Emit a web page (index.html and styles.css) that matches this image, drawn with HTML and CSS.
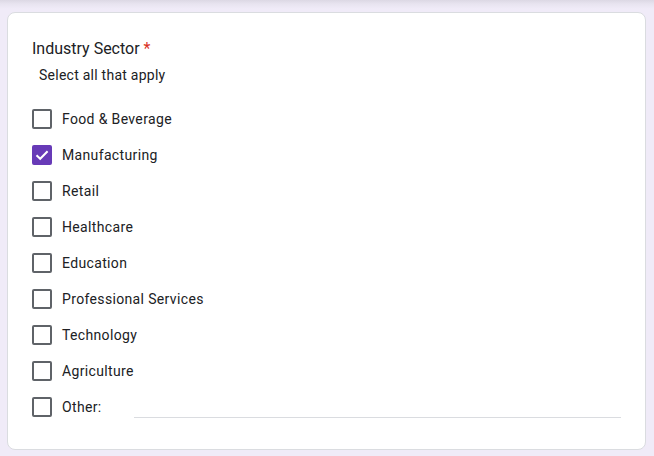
FILE: index.html
```html
<!DOCTYPE html>
<html lang="en">
<head>
<meta charset="utf-8">
<title>Industry Sector</title>
<link rel="stylesheet" href="styles.css">
</head>
<body>
<div class="page">
  <div class="card">
    <div class="title">Industry Sector <span class="req">*</span></div>
    <div class="hint">Select all that apply</div>
    <div class="options">
      <label class="opt"><span class="box"></span><span class="lbl">Food &amp; Beverage</span></label>
      <label class="opt"><span class="box checked"><svg viewBox="0 0 20 20" width="20" height="20"><path d="M4.5 10.2 L8.2 13.8 L15.6 6.2" fill="none" stroke="#fff" stroke-width="2"/></svg></span><span class="lbl">Manufacturing</span></label>
      <label class="opt"><span class="box"></span><span class="lbl">Retail</span></label>
      <label class="opt"><span class="box"></span><span class="lbl">Healthcare</span></label>
      <label class="opt"><span class="box"></span><span class="lbl">Education</span></label>
      <label class="opt"><span class="box"></span><span class="lbl">Professional Services</span></label>
      <label class="opt"><span class="box"></span><span class="lbl">Technology</span></label>
      <label class="opt"><span class="box"></span><span class="lbl">Agriculture</span></label>
      <div class="opt"><span class="box"></span><span class="lbl">Other:</span><span class="other-line"></span></div>
    </div>
  </div>
</div>
</body>
</html>
```
FILE: styles.css
```css
html, body {
  margin: 0;
  padding: 0;
}
body {
  background: #f0ebf8;
  font-family: Roboto, "Liberation Sans", Arial, sans-serif;
  color: #202124;
}
.page {
  height: 456px;
  padding: 12px 8px 0 7px;
  box-sizing: border-box;
  background: linear-gradient(to bottom, #dcd8e4 0px, #e8e4f0 4px, #f0ebf8 9px);
}
.card {
  background: #fff;
  border: 1px solid #dadce0;
  border-radius: 8px;
  padding: 24px 24px 24px 24px;
  height: 438px;
  box-sizing: border-box;
}
.title {
  font-size: 16px;
  line-height: 24px;
}
.req {
  color: #d93025;
}
.hint {
  font-size: 14px;
  line-height: 20px;
  margin-top: 4px;
  padding-left: 7px;
  letter-spacing: 0.25px;
}
.options {
  margin-top: 16px;
  display: flex;
  flex-direction: column;
}
.opt {
  display: flex;
  align-items: center;
  height: 36px;
  font-size: 14px;
}
.box {
  width: 20px;
  height: 20px;
  box-sizing: border-box;
  border: 2px solid #5f6368;
  border-radius: 2px;
  flex: none;
  display: flex;
}
.box.checked {
  background: #673ab7;
  border-color: #673ab7;
}
.box.checked svg {
  margin: -2px;
}
.lbl {
  margin-left: 10px;
  letter-spacing: 0.35px;
}
.other-line {
  flex: 1;
  align-self: flex-end;
  margin-left: 32px;
  margin-bottom: 7px;
  border-bottom: 1px solid #dadce0;
}
```
